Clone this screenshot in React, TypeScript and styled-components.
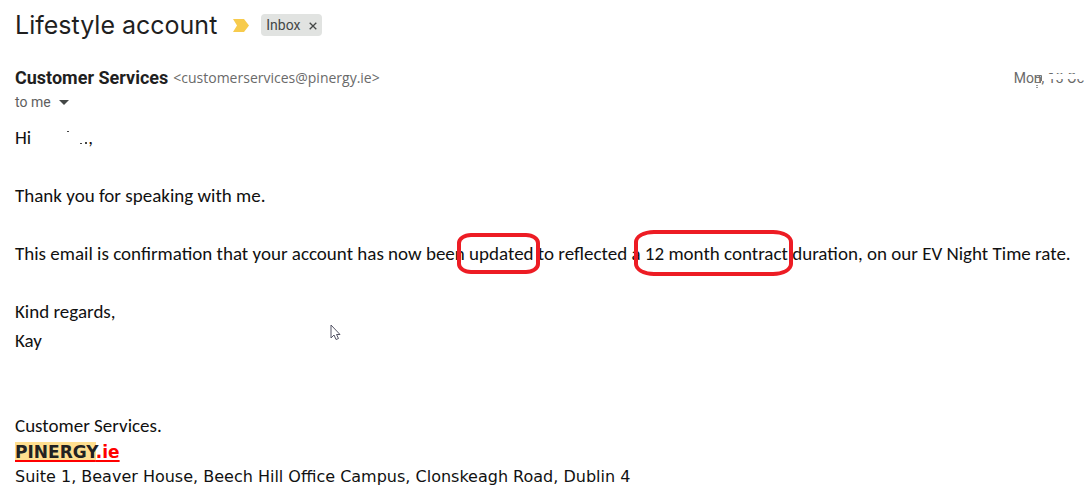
import React from "react";
import styled, { createGlobalStyle } from "styled-components";

const GlobalStyle = createGlobalStyle`
  * { box-sizing: border-box; }
  body { margin: 0; background: #fff; color: #1f1f1f; }
`;

const Page = styled.main`
  position: relative;
  padding: 8px 0 0 15px;
  overflow: hidden;
`;

const SubjectRow = styled.header`
  display: flex;
  align-items: center;
  height: 34px;
`;

const Subject = styled.h1`
  margin: 0 16px 0 0;
  font: 400 25px/34px Inter, sans-serif;
  white-space: nowrap;
`;

const Label = styled.span`
  display: flex;
  align-items: center;
  gap: 8px;
  height: 22px;
  margin-left: 12px;
  padding: 0 5px;
  border-radius: 4px;
  background: #e1e3e1;
  color: #444746;
  font: 400 14px/22px Roboto, sans-serif;
`;

const RemoveButton = styled.button`
  display: flex;
  padding: 2px 0 0;
  border: 0;
  background: none;
  color: #444746;
`;

const SenderRow = styled.div`
  display: flex;
  align-items: center;
  height: 24px;
  margin-top: 24px;
`;

const SenderName = styled.strong`
  margin-right: 5px;
  font: 700 18px/24px Roboto, sans-serif;
`;

const Address = styled.span`
  font: 400 14px/24px "Open Sans", sans-serif;
  color: #6a6a6a;
`;

const SentDate = styled.span`
  position: relative;
  margin-left: auto;
  white-space: nowrap;
  font: 400 14px/24px Roboto, sans-serif;
  color: #6a6a6a;
`;

const Smudge = styled.svg`
  position: absolute;
  left: 0;
  top: 0;
`;

const RecipientButton = styled.button`
  display: flex;
  align-items: center;
  gap: 8px;
  height: 24px;
  padding: 0;
  border: 0;
  background: none;
  color: #5e5e5e;
  font: 400 14px/24px Roboto, sans-serif;
`;

const Body = styled.article`
  margin-top: 9px;
  font: 400 19px/29px Carlito, Calibri, Lato, sans-serif;
  color: #111;
`;

const Paragraph = styled.p`
  margin: 0 0 29px;
  white-space: nowrap;
`;

const ErasedName = styled.svg`
  width: 57px;
  height: 20px;
  vertical-align: middle;
`;

const Circled = styled.span<{ $tall?: boolean }>`
  position: relative;

  &::after {
    content: "";
    position: absolute;
    inset: ${(p) => (p.$tall ? "-12px -5px -11px -11px" : "-9px -6px -9px -12px")};
    border: 4px solid #ed1c24;
    border-radius: ${(p) => (p.$tall ? "20px / 12px" : "14px / 10px")};
  }
`;

const Signature = styled.footer`
  margin-top: 58px;
`;

const SignatureLine = styled.div`
  line-height: 26px;
  white-space: nowrap;
`;

const BrandLink = styled.a`
  font: 700 17px/26px "DejaVu Sans", sans-serif;
  color: #f00;
  text-decoration-thickness: 2px;
  text-underline-offset: 2px;
`;

const Highlight = styled.mark`
  background: #ffdf8f;
  color: #222;
`;

const Postal = styled(SignatureLine)`
  font-family: "DejaVu Sans", sans-serif;
  font-size: 16px;
  line-height: 24px;
`;

const Pointer = styled.svg`
  position: absolute;
  left: 330px;
  top: 324px;
`;

export default function App() {
  return (
    <Page>
      <GlobalStyle />
      <SubjectRow>
        <Subject>Lifestyle account</Subject>
        <svg width="16" height="13" viewBox="0 0 16 13" aria-label="Important">
          <path d="M0 0h11l5 6.500-5 6.500H0l4-6.500z" fill="#f7cb4d" />
        </svg>
        <Label>
          Inbox
          <RemoveButton aria-label="Remove label Inbox">
            <svg width="8" height="8" viewBox="0 0 8 8" stroke="currentColor" strokeWidth="1.3">
              <path d="M.7.7l6.600 6.600M7.300.7L.7 7.300" />
            </svg>
          </RemoveButton>
        </Label>
      </SubjectRow>
      <SenderRow>
        <SenderName>Customer Services</SenderName>
        <Address>&lt;customerservices@pinergy.ie&gt;</Address>
        <SentDate>
          Mon, 13 Oc
          <Smudge width="70" height="24" viewBox="0 0 70 24" aria-hidden="true">
            <path d="M33 5h37v2H33zM33 8h37v5H33z" fill="#fff" />
            <path d="M21.500 11.500h5v5h-5zM23 9.500h4.500V15" fill="none" stroke="#777" />
            <path d="M22 19h2v1h-2zM22 21h2v1h-2z" fill="#999" />
          </Smudge>
        </SentDate>
      </SenderRow>
      <RecipientButton>
        to me
        <svg width="10" height="5" viewBox="0 0 10 5" aria-hidden="true">
          <path d="M0 0h10L5 5z" fill="#444746" />
        </svg>
      </RecipientButton>
      <Body>
        <Paragraph>
          Hi
          <ErasedName viewBox="0 0 57 20" aria-hidden="true">
            <path d="M36 2h2v1h-2zM49 14h2v1h-2zM54 13h2v2h-2z" fill="#444" />
          </ErasedName>
          ,
        </Paragraph>
        <Paragraph>Thank you for speaking with me.</Paragraph>
        <Paragraph>
          This email is confirmation that your account has now been <Circled>updated</Circled> to reflected a{" "}
          <Circled $tall>12 month contract</Circled> duration, on our EV Night Time rate.
        </Paragraph>
        <Paragraph>
          Kind regards,
          <br />
          Kay
        </Paragraph>
        <Signature>
          <SignatureLine>Customer Services.</SignatureLine>
          <SignatureLine>
            <BrandLink href="#">
              <Highlight>PINERGY</Highlight>.ie
            </BrandLink>
          </SignatureLine>
          <Postal>Suite 1, Beaver House, Beech Hill Office Campus, Clonskeagh Road, Dublin 4</Postal>
        </Signature>
      </Body>
      <Pointer width="12" height="18" viewBox="0 0 12 18" aria-hidden="true">
        <path d="M1 1v13l3-3 2 4.500 2.500-1-2-4h3.500z" fill="#fff" stroke="#556" />
      </Pointer>
    </Page>
  );
}
